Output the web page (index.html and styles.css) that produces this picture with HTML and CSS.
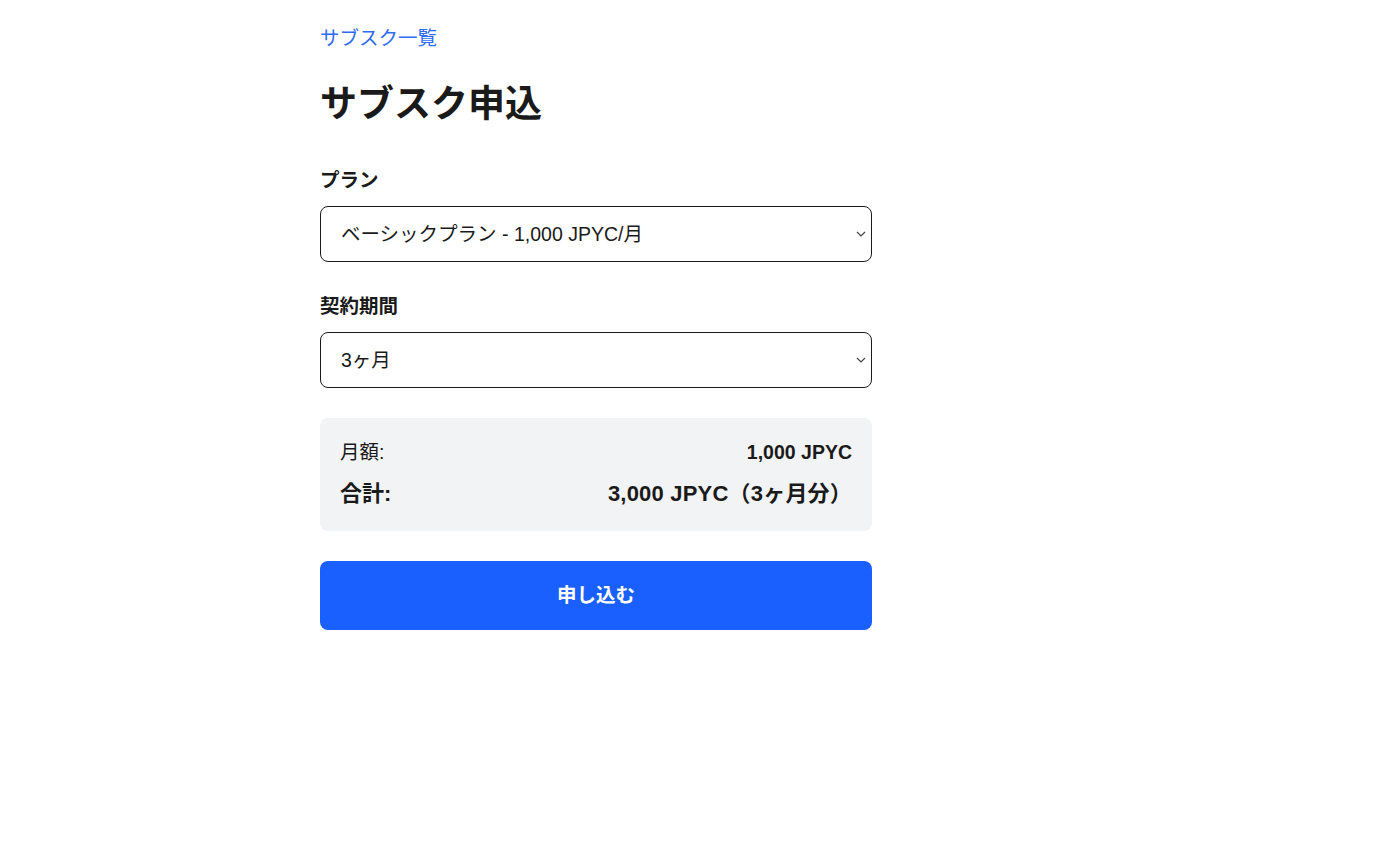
FILE: index.html
```html
<!DOCTYPE html>
<html lang="ja">
<head>
<meta charset="utf-8">
<title>サブスク申込</title>
<link rel="stylesheet" href="styles.css">
</head>
<body>
<main class="page">
  <a class="back-link" href="#">サブスク一覧</a>
  <h1 class="title">サブスク申込</h1>
  <form class="form">
    <div class="field">
      <label class="label" for="plan">プラン</label>
      <div class="select-wrap">
        <select id="plan" class="select">
          <option>ベーシックプラン - 1,000 JPYC/月</option>
        </select>
        <svg class="chevron" width="10" height="6" viewBox="0 0 10 6" aria-hidden="true"><path d="M1 1 L5 5 L9 1" fill="none" stroke="#444" stroke-width="1.2"/></svg>
      </div>
    </div>
    <div class="field">
      <label class="label" for="period">契約期間</label>
      <div class="select-wrap">
        <select id="period" class="select">
          <option>3ヶ月</option>
        </select>
        <svg class="chevron" width="10" height="6" viewBox="0 0 10 6" aria-hidden="true"><path d="M1 1 L5 5 L9 1" fill="none" stroke="#444" stroke-width="1.2"/></svg>
      </div>
    </div>
    <div class="summary">
      <div class="summary-row">
        <span>月額:</span>
        <span class="strong">1,000 JPYC</span>
      </div>
      <div class="summary-row total">
        <span>合計:</span>
        <span class="total-value">3,000 JPYC（3ヶ月分）</span>
      </div>
    </div>
    <button type="button" class="submit">申し込む</button>
  </form>
</main>
</body>
</html>
```

FILE: styles.css
```css
html, body {
  margin: 0;
  padding: 0;
  background: #ffffff;
}

body {
  font-family: "Liberation Sans", "Noto Sans CJK JP", sans-serif;
  font-size: 19.5px;
  line-height: 1.5;
  color: #1a1a1a;
}

.page {
  width: 552px;
  margin-left: 320px;
  padding-top: 24px;
  display: flex;
  flex-direction: column;
}

.back-link {
  align-self: flex-start;
  color: #2f6cf2;
  text-decoration: none;
  font-size: 19.5px;
  line-height: 29px;
}

.title {
  margin: 30px 0 39px;
  font-size: 37px;
  line-height: 44px;
  font-weight: 700;
  color: #1a1a1a;
}

.form {
  display: flex;
  flex-direction: column;
  gap: 30px;
}

.field {
  display: flex;
  flex-direction: column;
  gap: 11px;
}

.label {
  font-weight: 700;
  font-size: 19.5px;
  line-height: 29px;
}

.select-wrap {
  position: relative;
}

.select {
  appearance: none;
  -webkit-appearance: none;
  width: 100%;
  height: 56px;
  box-sizing: border-box;
  border: 1px solid #1a1a1a;
  border-radius: 8px;
  background: #ffffff;
  padding: 0 36px 0 20px;
  font-family: inherit;
  font-size: 19.5px;
  color: #1a1a1a;
}

.chevron {
  position: absolute;
  right: 6px;
  top: 25px;
  pointer-events: none;
}

.summary {
  background: #f2f3f5;
  border-radius: 8px;
  padding: 20px 20px 21px;
  display: flex;
  flex-direction: column;
  gap: 11px;
}

.summary-row {
  display: flex;
  justify-content: space-between;
  align-items: center;
  line-height: 29px;
}

.strong {
  font-weight: 700;
}

.summary-row.total {
  font-size: 22px;
  line-height: 32px;
  font-weight: 700;
}

.total-value {
  letter-spacing: 0.2px;
}

.submit {
  height: 69px;
  border: none;
  border-radius: 8px;
  background: #1a5fff;
  color: #ffffff;
  font-family: inherit;
  font-size: 19.5px;
  font-weight: 700;
  line-height: 29px;
  padding: 20px 0 20px;
  cursor: pointer;
}
```
